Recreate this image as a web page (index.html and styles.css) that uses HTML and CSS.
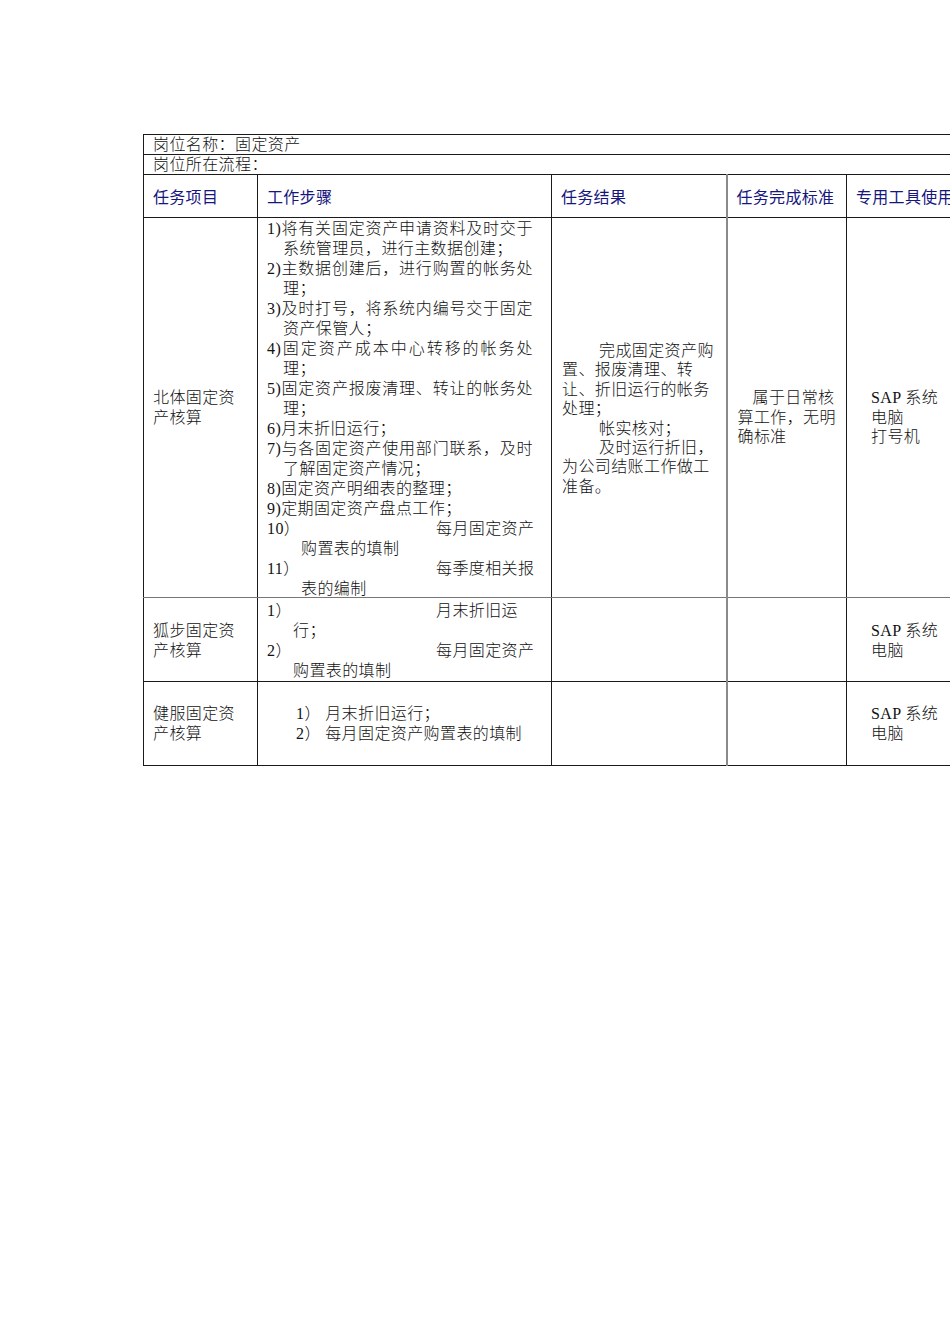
FILE: index.html
```html
<!DOCTYPE html>
<html lang="zh-CN">
<head>
<meta charset="utf-8">
<title>岗位说明</title>
<link rel="stylesheet" href="styles.css">
</head>
<body>
<table class="duty">
  <colgroup>
    <col class="c1"><col class="c2"><col class="c3"><col class="c4"><col class="c5">
  </colgroup>
  <tr class="info"><td colspan="5">岗位名称：固定资产</td></tr>
  <tr class="info"><td colspan="5">岗位所在流程：</td></tr>
  <tr class="head">
    <th>任务项目</th>
    <th>工作步骤</th>
    <th>任务结果</th>
    <th class="gl">任务完成标准</th>
    <th>专用工具使用</th>
  </tr>
  <tr class="r1">
    <td class="name">北体固定资<br>产核算</td>
    <td class="steps">
      <div class="ln j">1)将有关固定资产申请资料及时交于</div>
      <div class="ln in1">系统管理员，进行主数据创建；</div>
      <div class="ln j">2)主数据创建后，进行购置的帐务处</div>
      <div class="ln in1">理；</div>
      <div class="ln j">3)及时打号，将系统内编号交于固定</div>
      <div class="ln in1">资产保管人；</div>
      <div class="ln j">4)固定资产成本中心转移的帐务处</div>
      <div class="ln in1">理；</div>
      <div class="ln j">5)固定资产报废清理、转让的帐务处</div>
      <div class="ln in1">理；</div>
      <div class="ln">6)月末折旧运行；</div>
      <div class="ln j">7)与各固定资产使用部门联系，及时</div>
      <div class="ln in1">了解固定资产情况；</div>
      <div class="ln">8)固定资产明细表的整理；</div>
      <div class="ln">9)定期固定资产盘点工作；</div>
      <div class="ln"><span class="num">10）</span>每月固定资产</div>
      <div class="ln in2">购置表的填制</div>
      <div class="ln"><span class="num">11）</span>每季度相关报</div>
      <div class="ln in2 last">表的编制</div>
    </td>
    <td class="result">
      <div class="ln pi">完成固定资产购</div>
      <div class="ln">置、报废清理、转</div>
      <div class="ln">让、折旧运行的帐务</div>
      <div class="ln">处理；</div>
      <div class="ln pi">帐实核对；</div>
      <div class="ln pi">及时运行折旧，</div>
      <div class="ln">为公司结账工作做工</div>
      <div class="ln">准备。</div>
    </td>
    <td class="std gl">
      <div class="ln pi2">属于日常核</div>
      <div class="ln">算工作，无明</div>
      <div class="ln">确标准</div>
    </td>
    <td class="tool low">SAP 系统<br>电脑<br>打号机</td>
  </tr>
  <tr class="r2">
    <td class="name">狐步固定资<br>产核算</td>
    <td class="steps">
      <div class="ln"><span class="num">1）</span>月末折旧运</div>
      <div class="ln in3">行；</div>
      <div class="ln"><span class="num">2）</span>每月固定资产</div>
      <div class="ln in3">购置表的填制</div>
    </td>
    <td></td>
    <td class="gl"></td>
    <td class="tool">SAP 系统<br>电脑</td>
  </tr>
  <tr class="r3">
    <td class="name">健服固定资<br>产核算</td>
    <td class="steps short">
      <div class="ln">1） 月末折旧运行；</div>
      <div class="ln">2） 每月固定资产购置表的填制</div>
    </td>
    <td></td>
    <td class="gl"></td>
    <td class="tool">SAP 系统<br>电脑</td>
  </tr>
</table>
</body>
</html>
```

FILE: styles.css
```css
html, body {
  margin: 0;
  padding: 0;
  background: #ffffff;
  overflow: hidden;
}

body {
  font-family: "Liberation Serif", "Noto Sans CJK SC", serif;
  font-size: 16px;
  letter-spacing: 0.4px;
  color: #111111;
  width: 950px;
  height: 1344px;
}

.duty {
  border-collapse: collapse;
  table-layout: fixed;
  width: 964px;
  margin: 134px 0 0 143px;
}

.c1 { width: 114px; }
.c2 { width: 294px; }
.c3 { width: 175px; }
.c4 { width: 120px; }
.c5 { width: 261px; }

.duty td,
.duty th {
  border: 1px solid #1a1a1a;
  padding: 0;
  vertical-align: middle;
  font-weight: 300;
}

.duty .gl {
  border-left: 2px solid #8a8a8a;
}

.duty .info td {
  height: 19px;
  line-height: 19px;
  padding-left: 9px;
  vertical-align: top;
  overflow: hidden;
}

.duty .head th {
  height: 42px;
  text-align: left;
  padding-left: 9px;
  font-family: "Noto Sans CJK SC", sans-serif;
  font-weight: 400;
  font-size: 16px;
  letter-spacing: 0.3px;
  color: #16167e;
}

.duty .r1 td { border-bottom: 1px solid #777777; }
.duty .r2 td { height: 80px; padding-top: 2px; }
.duty .r3 td { height: 83px; }

.ln { white-space: nowrap; height: 20px; }
.ln.last { height: 18px; }
.j { text-align: justify; text-align-last: justify; }

.duty .name {
  padding-left: 9px;
  line-height: 20px;
}

.duty .steps {
  padding: 1px 18px 0 9px;
  line-height: 20px;
  vertical-align: top;
}
.duty .r2 .steps { padding-top: 3px; }
.duty .steps.short { vertical-align: middle; padding-top: 0; }
.in1 { padding-left: 16px; }
.in2 { padding-left: 34px; }
.in3 { padding-left: 26px; }
.num {
  display: inline-block;
  width: 169px;
}
.short .ln { padding-left: 29px; }

.duty .result {
  padding: 22px 8px 0 10px;
  line-height: 19.4px;
}
.result .ln, .std .ln { height: 19.4px; }
.pi { padding-left: 37px; }

.duty .std {
  padding: 20px 4px 0 10px;
  line-height: 19.5px;
}
.pi2 { padding-left: 15px; }

.duty .tool {
  padding-left: 24px;
  line-height: 19.5px;
}
.duty .tool.low { padding-top: 20px; }
```
